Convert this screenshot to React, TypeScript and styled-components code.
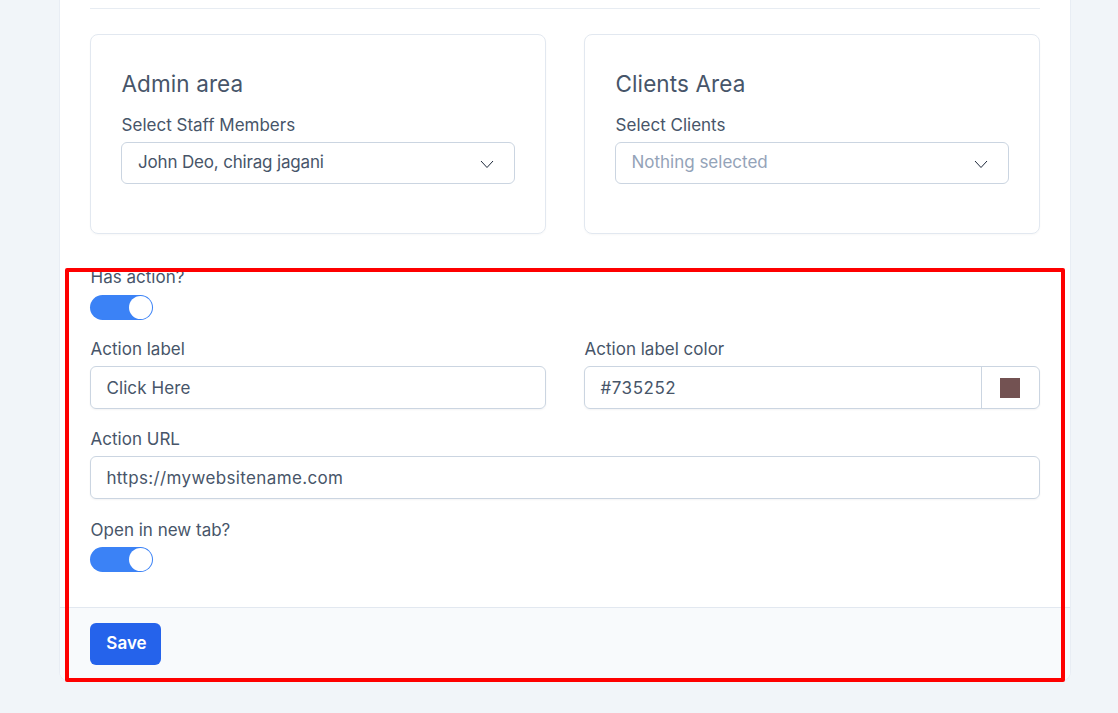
import { createGlobalStyle } from 'styled-components'
import styled from 'styled-components'

const GlobalStyle = createGlobalStyle`
  html, body {
    margin: 0;
    padding: 0;
    height: 713px;
    overflow: hidden;
    background: #f1f5f9;
    font-family: Inter, "Liberation Sans", sans-serif;
    color: #475569;
  }
  * { box-sizing: border-box; }
`

const Page = styled.div`
  position: relative;
  width: 1118px;
  height: 713px;
  padding-left: 60px;
`

const Panel = styled.div`
  width: 1010px;
  height: 680px;
  background: #fff;
  border-radius: 0 0 8px 8px;
  box-shadow: 0 0 0 1px #e8edf4;
  overflow: hidden;
`

const Body = styled.div`
  height: 607px;
  padding: 8px 30px 0;
`

const Divider = styled.div`
  height: 1px;
  background: #e7ecf2;
  margin-bottom: 25px;
`

const Areas = styled.div`
  display: grid;
  grid-template-columns: 456px 456px;
  column-gap: 38px;
  margin-bottom: 33px;
`

const AreaCard = styled.div`
  height: 200px;
  padding: 34px 30px 0;
  border: 1px solid #e2e8f0;
  border-radius: 8px;
  box-shadow: 0 1px 2px rgba(15, 23, 42, 0.03);
`

const AreaTitle = styled.h3`
  margin: 0 0 17px;
  padding-left: 0.5px;
  font-size: 22.5px;
  font-weight: 400;
  line-height: 29px;
  letter-spacing: 0.1px;
  color: #475569;
`

const Label = styled.label`
  display: block;
  padding-left: 0.6px;
  font-size: 17px;
  font-weight: 400;
  line-height: 21px;
  color: #475569;
  margin-bottom: 6px;
`

const SelectBox = styled.div`
  display: flex;
  align-items: center;
  justify-content: space-between;
  height: 42px;
  padding: 0 19px 2px 16px;
  border: 1px solid #cbd5e1;
  border-radius: 6px;
  font-size: 17px;
`

const SelectText = styled.span<{ $placeholder?: boolean }>`
  color: ${props => (props.$placeholder ? '#94a3b8' : '#475569')};
  letter-spacing: ${props => (props.$placeholder ? '0' : '-0.17px')};
  margin-left: ${props => (props.$placeholder ? '-0.6px' : '0')};
`

const Chevron = styled.svg`
  width: 16px;
  height: 16px;
  margin-top: 3px;
  color: #1e293b;
`

const ToggleField = styled.div<{ $offset: number; $gap: number }>`
  margin-top: ${props => props.$offset}px;

  label {
    margin-bottom: ${props => props.$gap}px;
  }
`

const Toggle = styled.div`
  position: relative;
  width: 63px;
  height: 25px;
  border-radius: 13px;
  background: #3b82f6;
`

const Knob = styled.span`
  position: absolute;
  top: 1px;
  right: 1px;
  width: 23px;
  height: 23px;
  border-radius: 50%;
  background: #fff;
`

const Row = styled.div`
  display: grid;
  grid-template-columns: 456px 456px;
  column-gap: 38px;
  margin-top: 19px;
`

const UrlField = styled.div`
  margin-top: 20px;
`

const InputBox = styled.div`
  display: flex;
  align-items: center;
  height: 43px;
  border: 1px solid #cbd5e1;
  border-radius: 6px;
  font-size: 17px;
  color: #475569;
  box-shadow: 0 1px 2px rgba(15, 23, 42, 0.05);
`

const InputText = styled.span<{ $tracking: number }>`
  flex: 1;
  padding-left: 15.4px;
  letter-spacing: ${props => props.$tracking}px;
`

const SwatchCell = styled.div`
  display: flex;
  align-items: center;
  justify-content: center;
  width: 58px;
  height: 100%;
  padding-right: 2px;
  border-left: 1px solid #cbd5e1;
`

const Swatch = styled.span`
  width: 20px;
  height: 20px;
  background: #735252;
`

const Footer = styled.div`
  height: 73px;
  padding: 15px 30px;
  background: #f8fafc;
  border-top: 1px solid #e2e8f0;
`

const SaveButton = styled.button`
  width: 71px;
  height: 42px;
  padding: 0 0 2px 2px;
  border: none;
  border-radius: 6px;
  background: #2563eb;
  color: #fff;
  font-family: inherit;
  font-size: 17px;
  font-weight: 600;
`

const Highlight = styled.div`
  position: absolute;
  left: 65px;
  top: 268px;
  width: 1000px;
  height: 414px;
  border: 4px solid #fe0000;
  border-radius: 2px;
  pointer-events: none;
`

function ChevronDown() {
  return (
    <Chevron viewBox="0 0 16 16" fill="none" stroke="currentColor" strokeWidth="1">
      <path d="M2 5l6 6.5L14 5" />
    </Chevron>
  )
}

export default function App() {
  return (
    <Page>
      <GlobalStyle />
      <Panel>
        <Body>
          <Divider />
          <Areas>
            <AreaCard>
              <AreaTitle>Admin area</AreaTitle>
              <Label>Select Staff Members</Label>
              <SelectBox>
                <SelectText>John Deo, chirag jagani</SelectText>
                <ChevronDown />
              </SelectBox>
            </AreaCard>
            <AreaCard>
              <AreaTitle>Clients Area</AreaTitle>
              <Label>Select Clients</Label>
              <SelectBox>
                <SelectText $placeholder>Nothing selected</SelectText>
                <ChevronDown />
              </SelectBox>
            </AreaCard>
          </Areas>
          <ToggleField $offset={0} $gap={7}>
            <Label>Has action?</Label>
            <Toggle><Knob /></Toggle>
          </ToggleField>
          <Row>
            <div>
              <Label>Action label</Label>
              <InputBox><InputText $tracking={0.1}>Click Here</InputText></InputBox>
            </div>
            <div>
              <Label>Action label color</Label>
              <InputBox>
                <InputText $tracking={0.55}>#735252</InputText>
                <SwatchCell><Swatch /></SwatchCell>
              </InputBox>
            </div>
          </Row>
          <UrlField>
            <Label>Action URL</Label>
            <InputBox><InputText $tracking={0.36}>https://mywebsitename.com</InputText></InputBox>
          </UrlField>
          <ToggleField $offset={21} $gap={6}>
            <Label>Open in new tab?</Label>
            <Toggle><Knob /></Toggle>
          </ToggleField>
        </Body>
        <Footer>
          <SaveButton>Save</SaveButton>
        </Footer>
      </Panel>
      <Highlight />
    </Page>
  )
}
